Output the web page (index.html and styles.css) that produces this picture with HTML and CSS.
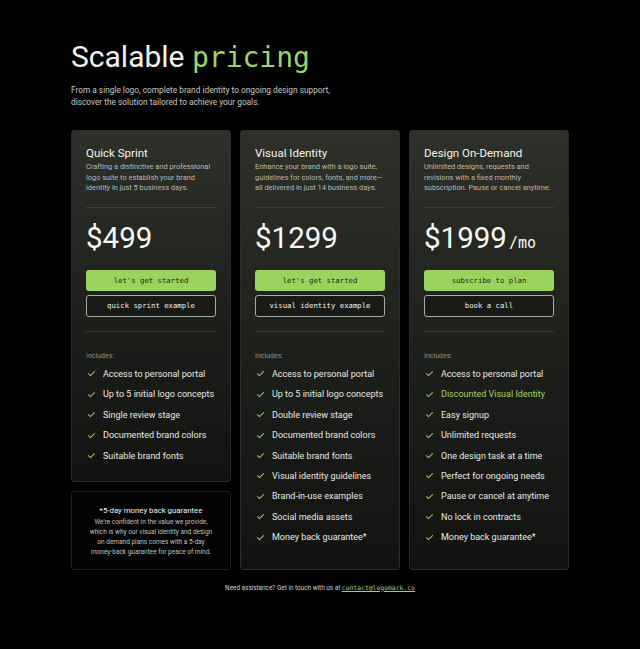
FILE: index.html
```html
<!DOCTYPE html>
<html>
<head>
<meta charset="utf-8">
<link rel="stylesheet" href="styles.css">
</head>
<body>
<main class="page">
  <header class="hero">
    <h1 class="title">Scalable <span class="mono green">pricing</span></h1>
    <p class="lead">From a single logo, complete brand identity to ongoing design support,<br>discover the solution tailored to achieve your goals.</p>
  </header>
  <section class="grid">
    <div class="col">
      <article class="card">
        <h2 class="card-title">Quick Sprint</h2>
        <p class="card-desc">Crafting a distinctive and professional logo suite to establish your brand identity in just 5 business days.</p>
        <hr class="rule">
        <div class="price">$499</div>
        <a class="btn btn-primary">let's get started</a>
        <a class="btn btn-outline">quick sprint example</a>
        <hr class="rule rule-low">
        <p class="includes">Includes:</p>
        <ul class="list">
          <li><svg class="check" viewBox="0 0 12 12"><path d="M2 6.3l2.6 2.6L10 3.4"/></svg>Access to personal portal</li>
          <li><svg class="check" viewBox="0 0 12 12"><path d="M2 6.3l2.6 2.6L10 3.4"/></svg>Up to 5 initial logo concepts</li>
          <li><svg class="check" viewBox="0 0 12 12"><path d="M2 6.3l2.6 2.6L10 3.4"/></svg>Single review stage</li>
          <li><svg class="check" viewBox="0 0 12 12"><path d="M2 6.3l2.6 2.6L10 3.4"/></svg>Documented brand colors</li>
          <li><svg class="check" viewBox="0 0 12 12"><path d="M2 6.3l2.6 2.6L10 3.4"/></svg>Suitable brand fonts</li>
        </ul>
      </article>
      <aside class="note">
        <h3 class="note-title">*5-day money back guarantee</h3>
        <p class="note-text">We're confident in the value we provide,<br>which is why our visual identity and design<br>on demand plans comes with a 5-day<br>money-back guarantee for peace of mind.</p>
      </aside>
    </div>
    <article class="card">
      <h2 class="card-title">Visual Identity</h2>
      <p class="card-desc">Enhance your brand with a logo suite, guidelines for colors, fonts, and more—all delivered in just 14 business days.</p>
      <hr class="rule">
      <div class="price">$1299</div>
      <a class="btn btn-primary">let's get started</a>
      <a class="btn btn-outline">visual identity example</a>
      <hr class="rule rule-low">
      <p class="includes">Includes:</p>
      <ul class="list">
        <li><svg class="check" viewBox="0 0 12 12"><path d="M2 6.3l2.6 2.6L10 3.4"/></svg>Access to personal portal</li>
        <li><svg class="check" viewBox="0 0 12 12"><path d="M2 6.3l2.6 2.6L10 3.4"/></svg>Up to 5 initial logo concepts</li>
        <li><svg class="check" viewBox="0 0 12 12"><path d="M2 6.3l2.6 2.6L10 3.4"/></svg>Double review stage</li>
        <li><svg class="check" viewBox="0 0 12 12"><path d="M2 6.3l2.6 2.6L10 3.4"/></svg>Documented brand colors</li>
        <li><svg class="check" viewBox="0 0 12 12"><path d="M2 6.3l2.6 2.6L10 3.4"/></svg>Suitable brand fonts</li>
        <li><svg class="check" viewBox="0 0 12 12"><path d="M2 6.3l2.6 2.6L10 3.4"/></svg>Visual identity guidelines</li>
        <li><svg class="check" viewBox="0 0 12 12"><path d="M2 6.3l2.6 2.6L10 3.4"/></svg>Brand-in-use examples</li>
        <li><svg class="check" viewBox="0 0 12 12"><path d="M2 6.3l2.6 2.6L10 3.4"/></svg>Social media assets</li>
        <li><svg class="check" viewBox="0 0 12 12"><path d="M2 6.3l2.6 2.6L10 3.4"/></svg>Money back guarantee*</li>
      </ul>
    </article>
    <article class="card">
      <h2 class="card-title">Design On-Demand</h2>
      <p class="card-desc">Unlimited designs, requests and revisions with a fixed monthly subscription. Pause or cancel anytime.</p>
      <hr class="rule">
      <div class="price">$1999<span class="per mono">/mo</span></div>
      <a class="btn btn-primary">subscribe to plan</a>
      <a class="btn btn-outline">book a call</a>
      <hr class="rule rule-low">
      <p class="includes">Includes:</p>
      <ul class="list">
        <li><svg class="check" viewBox="0 0 12 12"><path d="M2 6.3l2.6 2.6L10 3.4"/></svg>Access to personal portal</li>
        <li class="hl"><svg class="check" viewBox="0 0 12 12"><path d="M2 6.3l2.6 2.6L10 3.4"/></svg>Discounted Visual Identity</li>
        <li><svg class="check" viewBox="0 0 12 12"><path d="M2 6.3l2.6 2.6L10 3.4"/></svg>Easy signup</li>
        <li><svg class="check" viewBox="0 0 12 12"><path d="M2 6.3l2.6 2.6L10 3.4"/></svg>Unlimited requests</li>
        <li><svg class="check" viewBox="0 0 12 12"><path d="M2 6.3l2.6 2.6L10 3.4"/></svg>One design task at a time</li>
        <li><svg class="check" viewBox="0 0 12 12"><path d="M2 6.3l2.6 2.6L10 3.4"/></svg>Perfect for ongoing needs</li>
        <li><svg class="check" viewBox="0 0 12 12"><path d="M2 6.3l2.6 2.6L10 3.4"/></svg>Pause or cancel at anytime</li>
        <li><svg class="check" viewBox="0 0 12 12"><path d="M2 6.3l2.6 2.6L10 3.4"/></svg>No lock in contracts</li>
        <li><svg class="check" viewBox="0 0 12 12"><path d="M2 6.3l2.6 2.6L10 3.4"/></svg>Money back guarantee*</li>
      </ul>
    </article>
  </section>
  <footer class="foot">Need assistance? Get in touch with us at <a class="mail mono">contact@logomark.co</a></footer>
</main>
</body>
</html>
```

FILE: styles.css
```css
* { box-sizing: border-box; }
html, body { margin: 0; padding: 0; background: #000; }
body {
  font-family: Roboto, "Noto Sans", sans-serif;
  color: #f2f2ee;
  width: 640px;
  height: 649px;
  overflow: hidden;
}
.mono { font-family: "DejaVu Sans Mono", "Liberation Mono", monospace; }
.green { color: #9fd567; }
.page {
  width: 498px;
  margin-left: 71px;
  padding-top: 37px;
}
.hero { margin-bottom: 22px; }
.title {
  margin: 0;
  font-size: 30px;
  line-height: 40px;
  font-weight: 400;
}
.title .mono { font-size: 28px; font-weight: 400; }
.lead {
  margin: 7px 0 0;
  font-size: 8.3px;
  line-height: 11.5px;
  color: #c9c9c3;
}
.grid {
  display: grid;
  grid-template-columns: 160px 160px 160px;
  column-gap: 9px;
  align-items: stretch;
}
.col {
  display: flex;
  flex-direction: column;
  gap: 9px;
}
.card {
  border: 1px solid #2b2d28;
  border-radius: 3px;
  background: linear-gradient(180deg, #2e3129 0%, #1c1e1a 55%, #121311 100%);
  padding: 15px 14px 15px 14px;
  display: flex;
  flex-direction: column;
}
.card-title {
  margin: 0;
  font-size: 11.5px;
  line-height: 14px;
  font-weight: 400;
  color: #f5f5f0;
}
.card-desc {
  margin: 2px 0 0;
  font-size: 7.4px;
  line-height: 10.6px;
  color: #b9bab3;
}
.rule {
  border: 0;
  border-top: 1px solid #3a3d35;
  margin: 13px 0 0;
  height: 0;
}
.price {
  margin-top: 13px;
  height: 34px;
  font-size: 29.5px;
  line-height: 34px;
  font-weight: 400;
  color: #fafaf6;
  white-space: nowrap;
}
.per { font-size: 15px; line-height: 0; font-weight: 400; margin-left: 2px; }
.btn {
  display: flex;
  align-items: center;
  justify-content: center;
  height: 21px;
  border-radius: 3px;
  font-family: "DejaVu Sans Mono", "Liberation Mono", monospace;
  font-size: 7.3px;
}
.btn-primary {
  margin-top: 15px;
  background: #9bd35f;
  color: #1d2a12;
}
.btn-outline {
  margin-top: 4px;
  height: 22px;
  border: 1px solid #a9aaa2;
  background: #181a16;
  color: #f0f0ea;
}
.rule-low { margin-top: 14px; }
.includes {
  margin: 19px 0 0;
  font-size: 7px;
  line-height: 10px;
  color: #8b8c85;
}
.list {
  list-style: none;
  margin: 3px 0 0;
  padding: 0;
}
.list li {
  display: flex;
  align-items: center;
  height: 20.4px;
  font-size: 9px;
  white-space: nowrap;
  color: #e9e9e3;
}
.list li.hl { color: #9fd567; }
.check {
  width: 9px;
  height: 9px;
  margin: 0 7px 0 1px;
  fill: none;
  stroke: #8fc55a;
  stroke-width: 1.4;
  stroke-linecap: round;
  stroke-linejoin: round;
}
.note {
  flex: 1;
  border: 1px solid #1f201d;
  border-radius: 3px;
  background: #020202;
  padding: 13px 6px 11px;
  text-align: center;
}
.note-title {
  margin: 0;
  font-size: 7.8px;
  line-height: 11px;
  font-weight: 400;
  color: #f2f2ee;
}
.note-text {
  margin: 1px 0 0;
  font-size: 6.5px;
  line-height: 10.2px;
  color: #c2c2bb;
}
.foot {
  margin-top: 14px;
  text-align: center;
  font-size: 6.4px;
  color: #cfcfc9;
}
.mail {
  color: #9fd567;
  text-decoration: underline;
  font-size: 6.4px;
}
```
